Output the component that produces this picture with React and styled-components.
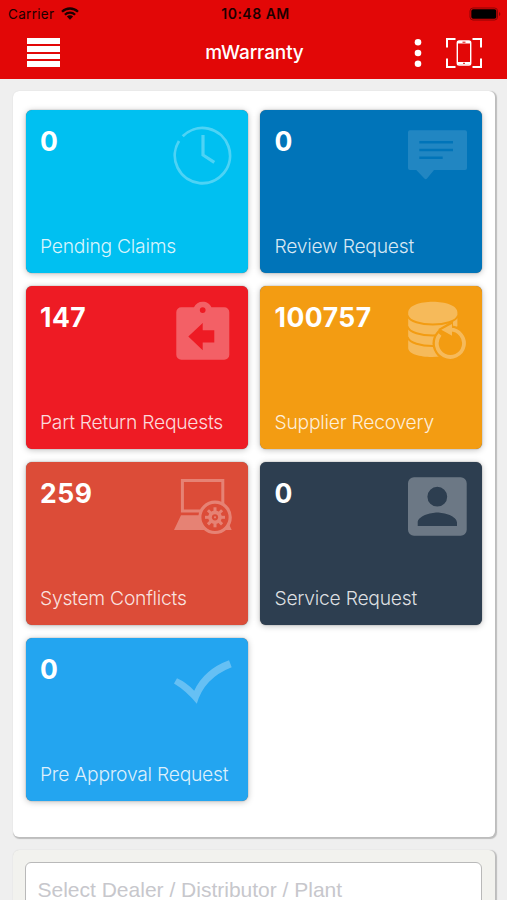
import styled, { createGlobalStyle } from "styled-components";

const ClockIcon = () => (
  <g fill="none" stroke="#fff" strokeWidth="2.8">
    <path d="M9.7 11.3A27.6 27.6 0 1 1 6 16" />
    <path d="M30 10V30L41.3 37.3" strokeWidth="3.2" />
  </g>
);

const CommentIcon = ({ bg }) => (
  <>
    <path
      fill="#fff"
      d="M3 5.3H58a2 2 0 0 1 2 2V43a2 2 0 0 1-2 2H27L20 53.6Q18.7 55 17.4 53.6L9.3 45H3a2 2 0 0 1-2-2V7.3a2 2 0 0 1 2-2Z"
    />
    <path
      d="M12.3 17.3H46M12.3 25H46M12.3 32.7H35.7"
      stroke={bg}
      strokeWidth="2.5"
    />
  </>
);

const ReturnIcon = () => (
  <path
    fill="#fff"
    fillRule="evenodd"
    d="M8.3 6.3H21C22.5 2.6 25.8.7 29.7.7S37 2.6 38.4 6.3H51.3a5 5 0 0 1 5 5V53.7a5 5 0 0 1-5 5H8.3a5 5 0 0 1-5-5V11.3a5 5 0 0 1 5-5ZM29.7 6.2a2.9 2.9 0 1 0 0 5.8 2.9 2.9 0 0 0 0-5.8ZM15.3 35.5L29.7 22V29.2H41.3V41.5H29.7V49.3Z"
  />
);

const DatabaseIcon = ({ bg }) => (
  <>
    <path
      fill="#fff"
      d="M1.2 11.5C1.2-2.9 50.4-2.9 50.4 11.5V47C48 59 1.2 59 1.2 47Z"
    />
    <path
      d="M.6 14.5C4 26.5 47.6 26.5 51 14.5M.6 25.5C4 37.5 47.6 37.5 51 25.5M.6 36C4 48 47.6 48 51 36"
      fill="none"
      stroke={bg}
      strokeWidth="1.9"
    />
    <circle cx="43.3" cy="42.3" r="17.8" fill={bg} />
    <path d="M31 28.3L46 19.5V36Z" fill={bg} />
    <path
      d="M33 33.5A13.6 13.6 0 1 0 43.3 28.7"
      fill="none"
      stroke="#fff"
      strokeWidth="3.8"
    />
    <path d="M34.3 28.8L45 23V34.7Z" fill="#fff" />
  </>
);

const LaptopIcon = ({ bg }) => (
  <>
    <path d="M9.4 34V3.5H49.8V34Z" fill="none" stroke="#fff" strokeWidth="3" />
    <path d="M8 38.3H52L58.7 53H1Z" fill="#fff" />
    <circle
      cx="42"
      cy="40.3"
      r="15.2"
      fill={bg}
      stroke="#fff"
      strokeWidth="3.2"
    />
    <g stroke="#fff" strokeWidth="3">
      {[0, 45, 90, 135].map((deg) => (
        <path key={deg} d="M42 30.3V50.3" transform={`rotate(${deg} 42 40.3)`} />
      ))}
    </g>
    <circle cx="42" cy="40.3" r="6.8" fill="#fff" />
    <circle cx="42" cy="40.3" r="3.1" fill={bg} />
    <circle cx="42" cy="40.3" r="1.1" fill="#fff" />
  </>
);

const PersonIcon = () => (
  <path
    fill="#fff"
    fillRule="evenodd"
    d="M7 .3H53.7a6 6 0 0 1 6 6V52.7a6 6 0 0 1-6 6H7a6 6 0 0 1-6-6V6.3a6 6 0 0 1 6-6ZM30.3 9.8a9.9 9.9 0 1 0 0 19.8 9.9 9.9 0 0 0 0-19.8ZM10.7 49V45.5C10.7 39 23.5 35.4 30.3 35.4S50 39 50 45.5V49Z"
  />
);

const CheckIcon = () => (
  <path
    fill="#fff"
    d="M1 30.5L4 25.3Q13.5 29.5 21.2 37.8Q31 16.5 56 7.3L58.7 14.2Q31 25 23.8 50.8Q13.5 38 1 30.5Z"
  />
);

const tiles = [
  { count: "0", label: "Pending Claims", color: "#00c0f1", fade: 0.3, Icon: ClockIcon },
  { count: "0", label: "Review Request", color: "#0074b9", fade: 0.13, Icon: CommentIcon },
  { count: "147", label: "Part Return Requests", color: "#ee1b24", fade: 0.3, Icon: ReturnIcon },
  { count: "100757", label: "Supplier Recovery", color: "#f39c12", fade: 0.3, Icon: DatabaseIcon },
  { count: "259", label: "System Conflicts", color: "#dc4c38", fade: 0.3, Icon: LaptopIcon },
  { count: "0", label: "Service Request", color: "#2d3e50", fade: 0.3, Icon: PersonIcon },
  { count: "0", label: "Pre Approval Request", color: "#23a5f0", fade: 0.3, Icon: CheckIcon },
];

const Tile = ({ count, label, color, fade, Icon }) => (
  <TileBox $color={color}>
    <TileTop>
      <Count>{count}</Count>
      <TileIcon viewBox="0 0 60 60" $fade={fade}>
        <Icon bg={color} />
      </TileIcon>
    </TileTop>
    <Label>{label}</Label>
  </TileBox>
);

const App = () => {
  return (
    <Screen>
      <GlobalStyle />
      <Header>
        <StatusBar>
          <Carrier>
            Carrier
            <svg width="18" height="13" viewBox="0 0 18 13">
              <g fill="none" stroke="#1c0000" strokeWidth="2.3">
                <path d="M1 4.8A11.4 11.4 0 0 1 17 4.8" />
                <path d="M3.9 7.7A7.3 7.3 0 0 1 14.1 7.7" />
              </g>
              <path d="M5.9 9.5A4.4 4.4 0 0 1 12.1 9.5L9 12.7Z" fill="#1c0000" />
            </svg>
          </Carrier>
          <Time>10:48 AM</Time>
          <Battery>
            <svg width="32" height="14" viewBox="0 0 32 14">
              <rect x="1" y="1" width="27.5" height="12" rx="3" fill="none" stroke="#8a0505" />
              <rect x="2.3" y="2.3" width="25" height="9.4" rx="1.8" fill="#000" />
              <path d="M30 5V9Q31.3 8.6 31.3 7T30 5Z" fill="#8a0505" />
            </svg>
          </Battery>
        </StatusBar>
        <NavBar>
          <MenuButton>
            <MenuLine />
            <MenuLine />
            <MenuLine />
            <MenuLine />
          </MenuButton>
          <Title>mWarranty</Title>
          <Actions>
            <svg width="8" height="30" viewBox="0 0 8 30" fill="#fff">
              <circle cx="4" cy="4.3" r="3.3" />
              <circle cx="4" cy="15" r="3.3" />
              <circle cx="4" cy="25.7" r="3.3" />
            </svg>
            <svg width="38" height="32" viewBox="0 0 38 32" fill="none" stroke="#fff">
              <path
                strokeWidth="2"
                d="M2 10.5V2H10.5M27.5 2H36V10.5M2 21.5V30H10.5M27.5 30H36V21.5"
              />
              <rect x="12.3" y="4" width="13.4" height="24" rx="1.8" strokeWidth="1.4" />
              <path d="M12.3 5.2H25.7M12.3 26.2H25.7" strokeWidth="2.6" />
              <path d="M17.5 5.2H20.5M18 26.3H20" stroke="#e20707" strokeWidth="1" />
            </svg>
          </Actions>
        </NavBar>
      </Header>
      <Content>
        <Dashboard>
          {tiles.map((tile) => (
            <Tile key={tile.label} {...tile} />
          ))}
        </Dashboard>
        <FilterCard>
          <DealerInput placeholder="Select Dealer / Distributor / Plant" />
        </FilterCard>
      </Content>
    </Screen>
  );
};
export default App;

const GlobalStyle = createGlobalStyle`
  * {
    box-sizing: border-box;
  }

  body {
    margin: 0;
    background: #efefef;
    font-family: Inter, "Liberation Sans", sans-serif;
  }

  svg {
    display: block;
  }
`;

const Screen = styled.div`
  display: flex;
  flex-direction: column;
  height: 900px;
  overflow: hidden;
  background: #efefef;
`;

const Header = styled.header`
  flex: none;
  height: 79px;
  background: #e20707;
`;

const StatusBar = styled.div`
  display: grid;
  grid-template-columns: 1fr auto 1fr;
  align-items: center;
  height: 27px;
  padding: 0 6px 0 10px;
  color: #1c0000;
`;

const Carrier = styled.div`
  display: flex;
  align-items: center;
  gap: 7px;
  margin-left: -2px;
  font-size: 13.5px;
  letter-spacing: 0.3px;
`;

const Time = styled.div`
  font-size: 14px;
  font-weight: 600;
  letter-spacing: 0.5px;
`;

const Battery = styled.div`
  justify-self: end;
`;

const NavBar = styled.div`
  display: grid;
  grid-template-columns: 1fr auto 1fr;
  align-items: center;
  height: 51px;
  padding: 0 25px 0 27px;
`;

const MenuButton = styled.div`
  display: flex;
  flex-direction: column;
  gap: 2px;
  width: 33px;
`;

const MenuLine = styled.span`
  height: 5.6px;
  background: #fff;
`;

const Title = styled.h1`
  margin: 0;
  color: #fff;
  font-size: 19px;
  font-weight: 500;
  line-height: 23px;
  letter-spacing: -0.15px;
`;

const Actions = styled.div`
  display: flex;
  align-items: center;
  justify-self: end;
  gap: 23px;
  margin-right: -1px;
`;

const Content = styled.main`
  display: flex;
  flex-direction: column;
  gap: 13px;
  padding: 12px 12px 0 13px;
`;

const Card = styled.section`
  flex: none;
  border-radius: 6px;
  box-shadow: 1px 1px 1px 0.5px #bdbdbd;
`;

const Dashboard = styled(Card)`
  display: grid;
  grid-template-columns: 222px 222px;
  grid-auto-rows: 163px;
  gap: 13px 12.5px;
  height: 746px;
  padding: 19px 12.5px;
  background: #fff;
`;

const TileBox = styled.div`
  display: flex;
  flex-direction: column;
  justify-content: space-between;
  padding: 15px 15px 14px 14.5px;
  border-radius: 6px;
  background: ${(props) => props.$color};
  box-shadow: 0 0 1px rgba(0, 0, 0, 0.6), 0 1px 6px rgba(0, 0, 0, 0.25);
`;

const TileTop = styled.div`
  display: flex;
  justify-content: space-between;
`;

const Count = styled.strong`
  color: #fff;
  font-size: 26.5px;
  font-weight: 700;
  line-height: 32px;
  letter-spacing: 0.5px;
`;

const TileIcon = styled.svg`
  width: 60px;
  height: 60px;
  opacity: ${(props) => props.$fade};
`;

const Label = styled.span`
  color: rgba(255, 255, 255, 0.85);
  font-size: 19.3px;
  font-weight: 300;
  line-height: 26px;
  letter-spacing: -0.25px;
  white-space: nowrap;
`;

const FilterCard = styled(Card)`
  height: 120px;
  padding: 12px 13px 12px 12px;
  background: #f2f2ee;
`;

const DealerInput = styled.input`
  display: block;
  width: 100%;
  height: 55px;
  padding: 0 11.5px;
  border: 1.5px solid #b9b9b9;
  border-radius: 6px;
  background: #fff;
  font-family: "Liberation Sans", sans-serif;
  font-size: 21px;

  &::placeholder {
    color: #c7c7cc;
  }
`;
